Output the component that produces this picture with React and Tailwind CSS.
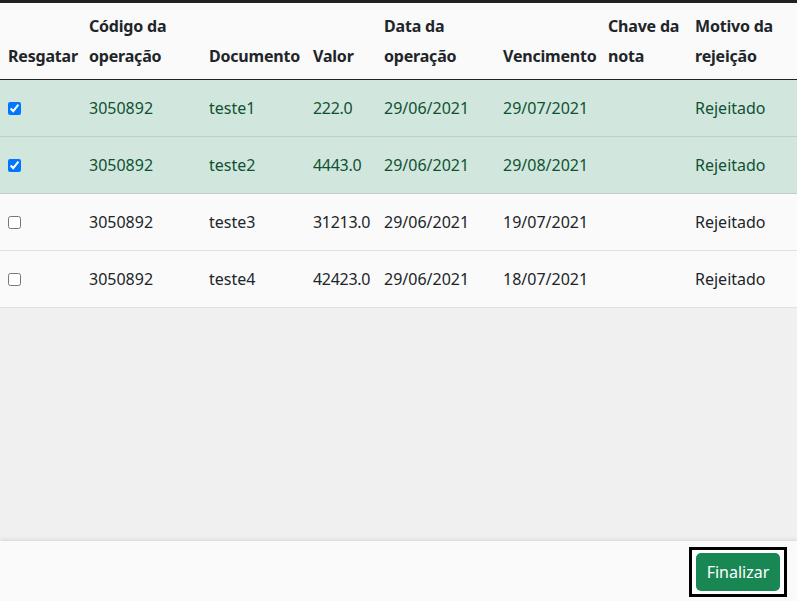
import { useState } from 'react'

const rows = [
  { codigo: '3050892', doc: 'teste1', valor: '222.0', data: '29/06/2021', venc: '29/07/2021', chave: '', motivo: 'Rejeitado', checked: true },
  { codigo: '3050892', doc: 'teste2', valor: '4443.0', data: '29/06/2021', venc: '29/08/2021', chave: '', motivo: 'Rejeitado', checked: true },
  { codigo: '3050892', doc: 'teste3', valor: '31213.0', data: '29/06/2021', venc: '19/07/2021', chave: '', motivo: 'Rejeitado', checked: false },
  { codigo: '3050892', doc: 'teste4', valor: '42423.0', data: '29/06/2021', venc: '18/07/2021', chave: '', motivo: 'Rejeitado', checked: false },
]

// header text split the way the columns wrap it
const headers = [
  ['Resgatar'],
  ['Código da', 'operação'],
  ['Documento'],
  ['Valor'],
  ['Data da', 'operação'],
  ['Vencimento'],
  ['Chave da', 'nota'],
  ['Motivo da', 'rejeição'],
]
const widths = ['w-[81px]', 'w-[120px]', 'w-[104px]', 'w-[71px]', 'w-[119px]', 'w-[105px]', 'w-[87px]', 'w-[110px]']

export default function App() {
  const [selected, setSelected] = useState(rows.map((r) => r.checked))

  const toggle = (i) => {
    setSelected((prev) => prev.map((v, j) => (j === i ? !v : v)))
  }

  return (
    <div className="flex h-screen flex-col overflow-hidden bg-[#f0f0f0] text-[16px] text-[#212529]" style={{ fontFamily: '"Noto Sans", "Open Sans", sans-serif' }}>
      <div className="h-[3px] shrink-0 bg-[#212121]" />

      <div className="flex-1">
        <table className="w-full table-fixed border-collapse bg-[#fafafa]">
          <colgroup>
            {widths.map((w, i) => (
              <col key={i} className={w} />
            ))}
          </colgroup>
          <thead>
            <tr className="border-b border-[#212529]">
              {headers.map((h) => (
                <th key={h.join(' ')} className="whitespace-nowrap px-2 py-2 text-left align-bottom font-bold leading-[30px] tracking-[-0.2px]">
                  {h.map((line, k) => (
                    <div key={k}>{line}</div>
                  ))}
                </th>
              ))}
            </tr>
          </thead>
          <tbody>
            {rows.map((r, i) => {
              const ok = selected[i]
              return (
                <tr
                  key={r.doc}
                  className={ok ? 'h-[57px] border-b border-[#bcd0c7] bg-[#d1e7dd] text-[#0f5132]' : 'h-[57px] border-b border-[#dee2e6]'}
                >
                  <td className="px-2 align-middle">
                    <input
                      type="checkbox"
                      checked={ok}
                      onChange={() => toggle(i)}
                      className="block h-[13px] w-[13px] accent-[#0075ff]"
                    />
                  </td>
                  <td className="px-2 align-middle">{r.codigo}</td>
                  <td className="px-2 align-middle">{r.doc}</td>
                  <td className="whitespace-nowrap px-2 align-middle tracking-[-0.3px]">{r.valor}</td>
                  <td className="px-2 align-middle">{r.data}</td>
                  <td className="px-2 align-middle">{r.venc}</td>
                  <td className="px-2 align-middle">{r.chave}</td>
                  <td className="px-2 align-middle">{r.motivo}</td>
                </tr>
              )
            })}
          </tbody>
        </table>
      </div>

      <div className="flex h-[60px] shrink-0 items-start justify-end bg-[#fafafa] pr-[10px] pt-[6px] shadow-[0_-1px_4px_rgba(0,0,0,0.12)]">
        <div className="border-[3px] border-black bg-white px-[4px] py-[3px]">
          <button className="block h-[38px] w-[84px] rounded-[5px] bg-[#198754] text-white">
            Finalizar
          </button>
        </div>
      </div>
    </div>
  )
}
